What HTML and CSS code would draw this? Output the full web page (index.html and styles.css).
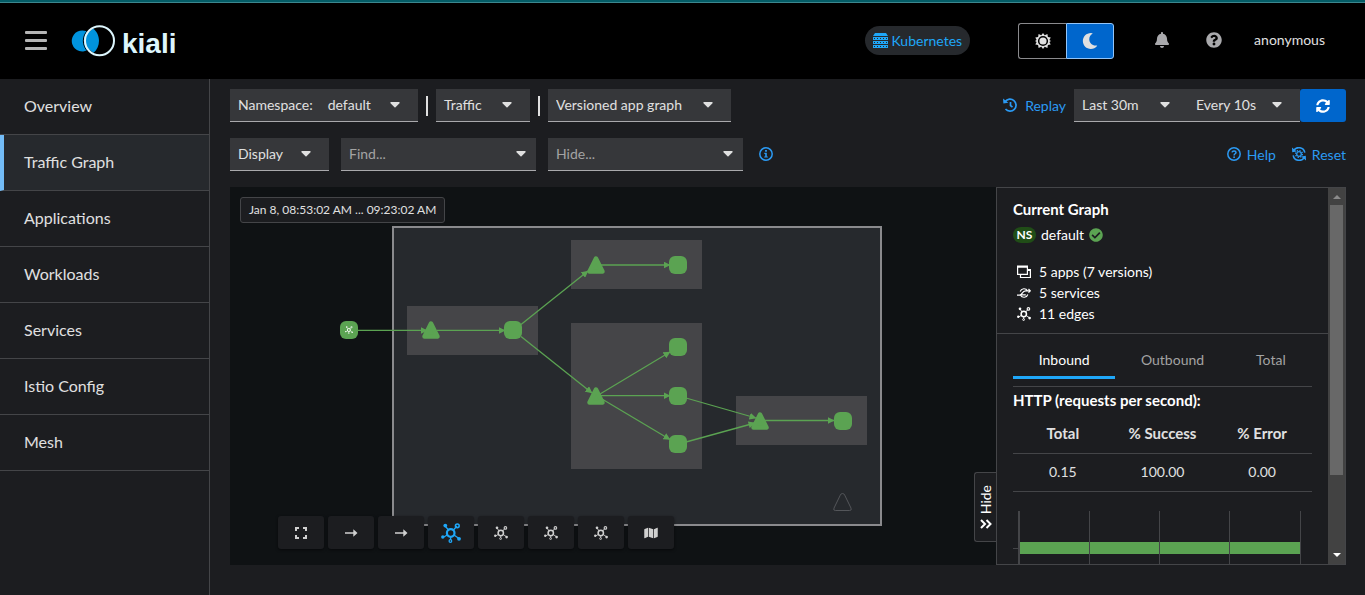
FILE: index.html
```html
<!DOCTYPE html>
<html lang="en">
<head>
<meta charset="utf-8">
<meta name="viewport" content="width=device-width, initial-scale=1">
<title>Kiali</title>
<link rel="stylesheet" href="styles.css">
</head>
<body>
<svg class="defs" aria-hidden="true">
  <symbol id="caret" viewBox="0 0 10 6"><path d="M1 0h8a.7.7 0 0 1 .5 1.200L5.500 5.200a.7.7 0 0 1-1 0L.5 1.200A.7.7 0 0 1 1 0z"/></symbol>
  <symbol id="topology" viewBox="0 0 20 20">
    <g fill="none" stroke="currentColor" stroke-width="1.300"><path d="M4 3l4 4.500M16 3l-4 4.500M2 14.500l5-3M18 15.500l-5-3.500M9.600 13v4"/><circle cx="9.700" cy="10" r="3.800" stroke-width="2.200"/><circle cx="16.300" cy="2.800" r="1.900" stroke-width="1.500"/><circle cx="9.400" cy="18" r="1.300"/></g>
    <circle cx="4.300" cy="2.600" r="1.900"/><circle cx="1.800" cy="14" r="1.700"/><circle cx="18" cy="15.800" r="1.900"/>
  </symbol>
  <symbol id="arrow" viewBox="0 0 14 14"><path d="M1 6.200h8.300V3.300L13.500 7l-4.200 3.700V7.800H1z"/></symbol>
  <symbol id="triangle" viewBox="-10 -10 20 20" overflow="visible"><path d="M0-6.500L6.500 6.500H-6.500z" stroke-width="4.500" stroke-linejoin="round"/></symbol>
</svg>

<header class="masthead">
  <button class="plain menu-button" aria-label="Global navigation"><span></span><span></span><span></span></button>
  <a class="brand" href="#overview" aria-label="Kiali">
    <svg class="brand-mark" width="46" height="32" viewBox="0 0 46 32" aria-hidden="true">
      <path fill="#0093dd" d="M11.500 5.500c2.500 0 4.500.8 6.200 2L22 3.500c3.500 2.500 6 7 6 12.300 0 5-2 9.300-5.500 12l-4.800-3.500a10.500 10.500 0 1 1-6.200-18.800z"/>
      <path d="M17 5a14.800 14.800 0 0 0 0 21.600" fill="none" stroke="#000" stroke-width="1"/>
      <circle cx="28.500" cy="15.800" r="14.500" fill="none" stroke="#ddf6fd" stroke-width="2"/>
    </svg>
    <span class="brand-name">kiali</span>
  </a>
  <div class="masthead-tools">
    <span class="cluster"><svg width="15" height="15" viewBox="0 0 15 15" aria-hidden="true"><path d="M2 0h11l2 3H0z"/><path d="M0 4h15v3H0zM0 8h15v3H0zM0 12h15v3H0z"/><path stroke="#26292d" stroke-dasharray="1 2" d="M1 5.500h13M1 9.500h13M1 13.500h13"/></svg>Kubernetes</span>
    <div class="theme" role="group" aria-label="Theme">
      <button aria-label="Light theme"><svg width="16" height="16" viewBox="0 0 16 16" aria-hidden="true"><path fill-rule="evenodd" d="M8 0l1.700 2.300 2.700-1.200.5 2.800 2.900.6L14.400 7 16 8l-1.600 1.100 1.300 2.500-2.800.5-.5 2.800-2.700-1.200L8 16l-1.700-2.300-2.700 1.200-.5-2.800-2.800-.5 1.300-2.500L0 8l1.600-1L.3 4.500l2.800-.6.5-2.800 2.700 1.200zM8 2.900a5.100 5.100 0 1 0 0 10.200A5.100 5.100 0 0 0 8 2.900zm0 1.500a3.600 3.600 0 1 1 0 7.200 3.600 3.600 0 0 1 0-7.200z"/></svg></button>
      <button class="selected" aria-pressed="true" aria-label="Dark theme"><svg width="16" height="16" viewBox="0 0 512 512" aria-hidden="true"><path d="M283.211 512c78.962 0 151.079-35.925 198.857-94.792 7.068-8.708-.639-21.430-11.562-19.350-124.203 23.654-238.262-71.576-238.262-196.954 0-72.222 38.662-138.635 101.498-174.394 9.686-5.512 7.250-20.197-3.756-22.230A258.156 258.156 0 0 0 283.211 0c-141.309 0-256 114.511-256 256 0 141.309 114.511 256 256 256z"/></svg></button>
    </div>
    <button class="plain bell" aria-label="Notifications"><svg width="14" height="16" viewBox="0 0 448 512" aria-hidden="true"><path d="M224 512c35.320 0 63.970-28.650 63.970-64H160.030c0 35.350 28.650 64 63.970 64zm215.390-149.710c-19.320-20.760-55.470-51.990-55.470-154.290 0-77.700-54.480-139.900-127.940-155.160V32c0-17.670-14.320-32-31.980-32s-31.980 14.330-31.980 32v20.840C118.560 68.100 64.080 130.300 64.080 208c0 102.300-36.150 133.530-55.470 154.290-6 6.450-8.660 14.160-8.610 21.710.11 16.400 12.980 32 32.100 32h383.800c19.120 0 32-15.600 32.100-32 .05-7.550-2.610-15.270-8.610-21.710z"/></svg></button>
    <button class="plain help-menu" aria-label="Help menu"><svg width="16" height="16" viewBox="0 0 512 512" aria-hidden="true"><path d="M504 256c0 136.997-111.043 248-248 248S8 392.997 8 256C8 119.083 119.043 8 256 8s248 111.083 248 248zM262.655 90c-54.497 0-89.255 22.957-116.549 63.758-3.536 5.286-2.353 12.415 2.715 16.258l34.699 26.310c5.205 3.947 12.621 3.008 16.665-2.122 17.864-22.658 30.113-35.797 57.303-35.797 20.429 0 45.698 13.148 45.698 32.958 0 14.976-12.363 22.667-32.534 33.976C247.128 238.528 216 254.941 216 296v4c0 6.627 5.373 12 12 12h56c6.627 0 12-5.373 12-12v-1.333c0-28.462 83.186-29.647 83.186-106.667 0-58.002-60.165-102-116.531-102zM256 338c-25.365 0-46 20.635-46 46 0 25.364 20.635 46 46 46s46-20.636 46-46c0-25.365-20.635-46-46-46z"/></svg></button>
    <button class="plain user">anonymous</button>
  </div>
</header>

<div class="shell">
  <nav class="sidebar" aria-label="Main">
    <a href="#overview">Overview</a>
    <a href="#graph" class="current" aria-current="page">Traffic Graph</a>
    <a href="#applications">Applications</a>
    <a href="#workloads">Workloads</a>
    <a href="#services">Services</a>
    <a href="#istio">Istio Config</a>
    <a href="#mesh">Mesh</a>
  </nav>

  <main class="content">
    <div class="toolbar">
      <button class="toggle namespace"><span>Namespace:</span><span>default</span><svg class="caret" aria-hidden="true"><use href="#caret"/></svg></button>
      <span class="divider"></span>
      <button class="toggle traffic"><span>Traffic</span><svg class="caret" aria-hidden="true"><use href="#caret"/></svg></button>
      <span class="divider"></span>
      <div class="field graph-type"><select aria-label="Graph type"><option>Versioned app graph</option><option>App graph</option></select><svg class="caret" aria-hidden="true"><use href="#caret"/></svg></div>
      <div class="toolbar-end">
        <a class="link replay" href="#replay"><svg width="14" height="14" viewBox="0 0 14 14" aria-hidden="true"><path d="M2.200 3.600A6 6 0 1 1 2.500 11M7.500 4v3.500l2 1.600" fill="none" stroke="currentColor" stroke-width="1.700"/><path d="M0 .6l.4 5 4.900-.8z"/></svg>Replay</a>
        <div class="time-controls">
          <div class="field duration"><select aria-label="Duration"><option>Last 30m</option><option>Last 1h</option></select><svg class="caret" aria-hidden="true"><use href="#caret"/></svg></div>
          <div class="field interval"><select aria-label="Refresh interval"><option>Every 10s</option><option>Every 15s</option></select><svg class="caret" aria-hidden="true"><use href="#caret"/></svg></div>
          <button class="refresh" aria-label="Refresh"><svg width="14" height="14" viewBox="0 0 512 512" aria-hidden="true"><path d="M370.720 133.280C339.458 104.008 298.888 87.962 255.848 88c-77.458.068-144.328 53.178-162.791 126.850-1.344 5.363-6.122 9.150-11.651 9.150H24.103c-7.498 0-13.194-6.807-11.807-14.176C33.933 94.924 134.813 8 256 8c66.448 0 126.791 26.136 171.315 68.685L463.030 40.970C478.149 25.851 504 36.559 504 57.941V192c0 13.255-10.745 24-24 24H345.941c-21.382 0-32.090-25.851-16.971-40.971l41.750-41.749zM32 296h134.059c21.382 0 32.090 25.851 16.971 40.971l-41.750 41.750c31.262 29.273 71.835 45.319 114.876 45.280 77.418-.07 144.315-53.144 162.787-126.849 1.344-5.363 6.122-9.150 11.651-9.150h57.304c7.498 0 13.194 6.807 11.807 14.176C478.067 417.076 377.187 504 256 504c-66.448 0-126.791-26.136-171.315-68.685L48.970 471.030C33.851 486.149 8 475.441 8 454.059V320c0-13.255 10.745-24 24-24z"/></svg></button>
        </div>
      </div>
    </div>

    <div class="toolbar second">
      <button class="toggle display"><span>Display</span><svg class="caret" aria-hidden="true"><use href="#caret"/></svg></button>
      <div class="field search"><input type="text" placeholder="Find..." aria-label="Find"><svg class="caret" aria-hidden="true"><use href="#caret"/></svg></div>
      <div class="field search"><input type="text" placeholder="Hide..." aria-label="Hide"><svg class="caret" aria-hidden="true"><use href="#caret"/></svg></div>
      <button class="plain info" aria-label="Find and hide help"><svg width="14" height="14" viewBox="0 0 14 14" aria-hidden="true"><circle cx="7" cy="7" r="6.200" fill="none" stroke="currentColor" stroke-width="1.500"/><path d="M6.100 3h1.800v1.700H6.100zM5.300 5.800h2.500v3.600h1v1.200H5.200V9.400h1V7h-.9z"/></svg></button>
      <div class="toolbar-end">
        <a class="link" href="#help"><svg width="14" height="14" viewBox="0 0 14 14" aria-hidden="true"><circle cx="7" cy="7" r="6.200" fill="none" stroke="currentColor" stroke-width="1.500"/><path d="M5 5.300C5.400 3.300 9 3.500 9 5.400 9 6.800 7.100 6.700 7.100 8.400" fill="none" stroke="currentColor" stroke-width="1.500"/><circle cx="7.100" cy="10.200" r=".9"/></svg>Help</a>
        <a class="link" href="#reset"><svg width="14" height="14" viewBox="0 0 14 14" aria-hidden="true"><path d="M1.500 4a6 6 0 0 1 11.300 1.700M12.500 10A6 6 0 0 1 1.200 8.300" fill="none" stroke="currentColor" stroke-width="1.600"/><path d="M0 .5l.2 4.700 4.600-.6zM14 13.500l-.2-4.700-4.600.6z"/><circle cx="7" cy="7" r="2.300" fill="none" stroke="currentColor" stroke-width="1.300"/><circle cx="7" cy="7" r="3.400" fill="none" stroke="currentColor" stroke-width="1.300" stroke-dasharray="1.300 1.370"/></svg>Reset</a>
      </div>
    </div>

    <section class="workspace">
      <div class="graph">
        <svg class="canvas" role="img" aria-label="Traffic graph of the default namespace">
          <defs><marker id="head" viewBox="0 0 7 7" refX="6.500" refY="3.500" markerWidth="7" markerHeight="7" markerUnits="userSpaceOnUse" orient="auto"><path d="M0 0l7 3.500L0 7z" fill="#5ba352"/></marker></defs>
          <rect x="163" y="40" width="488" height="298" fill="#26292d" stroke="#8a8a8d" stroke-width="2"/>
          <g fill="#454548">
            <rect x="177" y="119" width="131" height="49"/>
            <rect x="341" y="53" width="131" height="49"/>
            <rect x="341" y="136" width="131" height="146"/>
            <rect x="506" y="209" width="131" height="49"/>
          </g>
          <g stroke="#5ba352" stroke-width="1.300">
            <path marker-end="url(#head)" d="M127 143.400H197"/><path marker-end="url(#head)" d="M207 143.400H275"/>
            <path marker-end="url(#head)" d="M291 137.500L358 84"/><path marker-end="url(#head)" d="M291 149.500L362 206"/>
            <path marker-end="url(#head)" d="M371 78H440"/><path marker-end="url(#head)" d="M370 207L440 165"/>
            <path marker-end="url(#head)" d="M371 208.700H440"/><path marker-end="url(#head)" d="M372 212L440 252.500"/>
            <path marker-end="url(#head)" d="M456 211L526 231"/><path marker-end="url(#head)" d="M456 255L525 236"/>
            <path marker-end="url(#head)" d="M535 233.500H604"/>
          </g>
          <g fill="#5ba352">
            <rect x="110" y="134" width="18" height="18" rx="6"/>
            <rect x="274" y="134" width="18" height="18" rx="6"/>
            <rect x="439" y="69" width="18" height="18" rx="6"/>
            <rect x="439" y="151" width="18" height="18" rx="6"/>
            <rect x="439" y="200" width="18" height="18" rx="6"/>
            <rect x="439" y="248" width="18" height="18" rx="6"/>
            <rect x="604" y="225" width="18" height="18" rx="6"/>
          </g>
          <g fill="#5ba352" stroke="#5ba352">
            <use href="#triangle" x="191" y="133" width="20" height="20"/>
            <use href="#triangle" x="356" y="68" width="20" height="20"/>
            <use href="#triangle" x="356" y="199" width="20" height="20"/>
            <use href="#triangle" x="520" y="224" width="20" height="20"/>
          </g>
          <path d="M612.500 306.500q1.500 0 2.200 1.600l6.300 13q1 2.400-1.300 2.400h-14.400q-2.300 0-1.300-2.400l6.300-13q.7-1.600 2.200-1.600z" fill="none" stroke="#54565a"/>
          <use href="#topology" x="115" y="139" width="8" height="8" fill="#fff" color="#fff"/>
        </svg>
        <span class="time-range">Jan 8, 08:53:02 AM ... 09:23:02 AM</span>
        <div class="graph-tools" role="toolbar" aria-label="Graph layout">
          <button aria-label="Fit to screen"><svg class="outline" width="14" height="14" viewBox="0 0 14 14" stroke-width="2" aria-hidden="true"><path d="M2 5V2h3M9 2h3v3M12 9v3H9M5 12H2V9"/></svg></button>
          <button aria-label="Hide healthy edges"><svg width="14" height="14" aria-hidden="true"><use href="#arrow"/></svg></button>
          <button aria-label="Hide idle edges"><svg width="14" height="14" aria-hidden="true"><use href="#arrow"/></svg></button>
          <button class="active" aria-label="Layout default"><svg width="20" height="20" aria-hidden="true"><use href="#topology"/></svg></button>
          <button aria-label="Layout 1"><svg width="14" height="14" aria-hidden="true"><use href="#topology"/></svg></button>
          <button aria-label="Layout 2"><svg width="14" height="14" aria-hidden="true"><use href="#topology"/></svg></button>
          <button aria-label="Layout 3"><svg width="14" height="14" aria-hidden="true"><use href="#topology"/></svg></button>
          <button aria-label="Legend"><svg width="14" height="12" viewBox="0 0 576 512" aria-hidden="true"><path d="M0 117.660v346.320c0 11.320 11.430 19.060 21.940 14.860L160 416V32L20.120 87.950A32.006 32.006 0 0 0 0 117.660zM192 416l192 64V96L192 32v384zM554.060 33.160L416 96v384l139.880-55.950A31.996 31.996 0 0 0 576 394.340V48.020c0-11.320-11.430-19.060-21.940-14.860z"/></svg></button>
        </div>
        <button class="hide-panel"><span>Hide</span><svg class="outline" width="12" height="10" viewBox="0 0 12 10" stroke-width="2" aria-hidden="true"><path d="M1 1l4 4-4 4M6.500 1l4 4-4 4"/></svg></button>
      </div>

      <aside class="summary">
        <div class="summary-body">
          <div class="summary-head">
            <h2>Current Graph</h2>
            <p class="ns"><span class="badge">NS</span>default<svg width="14" height="14" viewBox="0 0 512 512" aria-hidden="true"><path d="M504 256c0 136.967-111.033 248-248 248S8 392.967 8 256 119.033 8 256 8s248 111.033 248 248zM227.314 387.314l184-184c6.248-6.248 6.248-16.379 0-22.627l-22.627-22.627c-6.248-6.248-16.379-6.249-22.628 0L216 308.118l-70.059-70.059c-6.248-6.248-16.379-6.248-22.628 0l-22.627 22.627c-6.248 6.248-6.248 16.379 0 22.627l104 104c6.249 6.249 16.379 6.249 22.628.001z"/></svg></p>
            <ul>
              <li><svg width="14" height="14" viewBox="0 0 14 14" aria-hidden="true"><path fill="none" stroke="currentColor" stroke-width="1.200" d="M.6 1v8.400h9.800V1M3.500 9.500v3h9.900V4.500h-3"/><path d="M0 .5h11v2.300H0zM10.500 4h3.500v2h-3.500z"/></svg>5 apps (7 versions)</li>
              <li><svg class="outline" width="14" height="14" viewBox="0 0 14 14" stroke-width="1.200" aria-hidden="true"><path d="M3.200 5.500a4 4 0 0 1 7.300-.7M10.800 8.500a4 4 0 0 1-7.300.7M0 9.200h2.500c3 0 2.500-4.400 6-4.400H13M8.800 8.800H4.500M11.500 3l1.800 1.800-1.800 1.800"/></svg>5 services</li>
              <li><svg width="14" height="14" aria-hidden="true"><use href="#topology"/></svg>11 edges</li>
            </ul>
          </div>
          <div class="metrics">
            <div class="tabs" role="tablist">
              <button role="tab" aria-selected="true">Inbound</button>
              <button role="tab">Outbound</button>
              <button role="tab">Total</button>
            </div>
            <h3>HTTP (requests per second):</h3>
            <table>
              <thead><tr><th>Total</th><th>% Success</th><th>% Error</th></tr></thead>
              <tbody><tr><td>0.15</td><td>100.00</td><td>0.00</td></tr></tbody>
            </table>
            <svg class="chart" role="img" aria-label="Responses: 100% OK">
              <rect x="6" y="31" width="281" height="12" fill="#5ba352"/>
              <g fill="#444548"><rect x="0" y="37" width="6" height="1"/><rect x="5" width="2" height="100%"/><rect x="76" width="1" height="100%"/><rect x="146" width="1" height="100%"/><rect x="216" width="1" height="100%"/><rect x="287" width="1" height="100%"/></g>
            </svg>
          </div>
        </div>
        <div class="scrollbar" aria-hidden="true">
          <svg width="8" height="4" viewBox="0 0 8 4"><path d="M4 0l4 4H0z" fill="#8b8b8b"/></svg>
          <span class="track"><span class="thumb"></span></span>
          <svg width="8" height="4" viewBox="0 0 8 4"><path d="M0 0h8L4 4z" fill="#fff"/></svg>
        </div>
      </aside>
    </section>
  </main>
</div>
</body>
</html>
```

FILE: styles.css
```css
* { box-sizing: border-box; }

body {
  margin: 0;
  min-height: 100vh;
  display: flex;
  flex-direction: column;
  background: #1c1d20;
  color: #e0e0e0;
  font: 14px/21px Lato, "Open Sans", sans-serif;
}

button, select, input {
  font: inherit;
  color: inherit;
  border: 0;
  border-radius: 0;
  padding: 0;
  margin: 0;
  background: none;
}

svg { fill: currentColor; flex: none; }
.outline { fill: none; stroke: currentColor; }
h2, h3, p, ul { margin: 0; padding: 0; font-size: 14px; }
h2, h3, th { font-size: 15px; }
ul { list-style: none; }
a { color: inherit; text-decoration: none; }
.defs { position: absolute; width: 0; height: 0; }

.masthead {
  display: flex;
  align-items: center;
  height: 79px;
  padding: 0 40px 0 25px;
  background: #000;
  border-top: 2px solid #045c66;
  box-shadow: inset 0 1px #3c878e;
}

.menu-button { display: grid; gap: 5px; width: 22px; }
.menu-button span { height: 3px; border-radius: 1px; background: #b5b5b5; }
.brand { display: flex; align-items: center; gap: 5px; margin-left: 24px; }
.brand-name {
  font: bold 28px/32px "Liberation Sans", sans-serif;
  color: #ddf6fd;
  padding-top: 6px;
}
.masthead-tools { display: flex; align-items: center; margin-left: auto; }
.cluster {
  display: flex;
  align-items: center;
  gap: 3px;
  height: 29px;
  padding: 0 8px;
  border-radius: 15px;
  background: #26292d;
  color: #1fa7f8;
}
.theme { display: flex; margin-left: 48px; }
.theme button {
  display: grid;
  place-items: center;
  width: 48px;
  height: 36px;
  border: 1px solid #8a8a8d;
  border-right: 0;
  border-radius: 3px 0 0 3px;
}
.theme .selected { background: #0066cc; border: 1px solid #92c5f9; border-radius: 0 3px 3px 0; }
.bell { margin-left: 41px; }
.help-menu { margin-left: 37px; }
.bell, .help-menu { display: grid; padding-bottom: 2px; color: #a9a9ac; }
.user { margin-left: 32px; padding-bottom: 3px; }

.shell { display: flex; flex: 1; }
.sidebar { width: 210px; flex: none; border-right: 1px solid #444548; }
.sidebar a {
  display: flex;
  align-items: center;
  height: 56px;
  padding: 0 0 2px 24px;
  border-bottom: 1px solid #444548;
  font-size: 16px;
}
.sidebar .current { background: #26292d; border-left: 4px solid #73bcf7; padding-left: 20px; }

.content {
  flex: 1;
  min-width: 0;
  display: flex;
  flex-direction: column;
  gap: 16px;
  padding: 10px 19px 30px 20px;
}

.toolbar { display: flex; align-items: center; gap: 8px; height: 33px; }
.second { gap: 12px; }
.toolbar-end { display: flex; align-items: center; gap: 16px; margin-left: auto; }
.toolbar:not(.second) .toolbar-end { gap: 8px; }
.divider { width: 2px; height: 20px; background: #e0e0e0; }

.toggle, .field {
  display: flex;
  align-items: center;
  height: 33px;
  background: #36373a;
  border-bottom: 1px solid #a9a9ac;
}
.toggle { padding: 0 18px 0 8px; gap: 12px; }
.toggle span { padding-bottom: 2px; }
.caret { width: 10px; height: 6px; margin-left: auto; }
.namespace { width: 188px; gap: 15px; }
.traffic { width: 94px; }
.graph-type { width: 183px; }
.display { width: 99px; }
.search { width: 195px; }
.duration { width: 114px; }
.interval { width: 112px; }
.field { position: relative; }
.field select, .field input { appearance: none; width: 100%; height: 32px; padding: 0 26px 2px 8px; outline: 0; }
.field .caret { position: absolute; right: 18px; pointer-events: none; }
.search .caret { right: 10px; }
.field input::placeholder { color: #a3a3a3; opacity: 1; }

.link { display: flex; align-items: center; gap: 6px; padding-bottom: 1px; color: #2b9af3; }
.replay { gap: 8px; }
.time-controls { display: flex; }
.refresh {
  display: grid;
  place-items: center;
  width: 46px;
  height: 33px;
  border-radius: 3px;
  background: #0066cc;
  color: #fff;
}
.info { display: grid; margin-left: 4px; padding-bottom: 1px; color: #2b9af3; }

.workspace { flex: 1; display: flex; min-height: 378px; }
.graph { position: relative; flex: 1; min-width: 0; background: #0f1214; overflow: hidden; }
.canvas { position: absolute; width: 100%; height: 100%; }
.time-range {
  position: absolute;
  left: 10px;
  top: 10px;
  padding: 1px 8px 2px;
  border: 1px solid #444548;
  border-radius: 3px;
  background: #1c1d20;
  font-size: 12px;
}
.graph-tools { position: absolute; left: 48px; bottom: 16px; display: flex; gap: 4px; }
.graph-tools button {
  display: grid;
  place-items: center;
  width: 46px;
  height: 33px;
  border-radius: 3px;
  background: #1c1d20;
  color: #d0d0d0;
  box-shadow: 0 1px 3px #0008;
}
.graph-tools .active { color: #1fa7f8; }
.hide-panel {
  position: absolute;
  right: 0;
  bottom: 23px;
  display: flex;
  flex-direction: column;
  align-items: center;
  justify-content: center;
  width: 22px;
  height: 70px;
  gap: 5px;
  border: 1px solid #444548;
  border-right: 0;
  border-radius: 3px 0 0 3px;
  background: #1c1d20;
  color: #fff;
}
.hide-panel span { writing-mode: vertical-rl; rotate: 180deg; }

.summary { display: flex; width: 350px; flex: none; border: 1px solid #444548; color: #fff; }
.summary-body { flex: 1; display: flex; flex-direction: column; }
.summary-head { padding: 11px 16px 9px; border-bottom: 1px solid #444548; }
.ns { display: flex; align-items: center; gap: 5px; padding: 4px 0 16px; }
.badge {
  width: 23px;
  border-radius: 8px;
  background: #204d17;
  font-size: 12px;
  line-height: 16px;
  font-weight: 700;
  text-align: center;
}
.ns svg { color: #5ba352; }
.summary li { display: flex; align-items: center; gap: 8px; padding-left: 4px; }
.metrics { flex: 1; display: flex; flex-direction: column; padding: 0 16px; }
.tabs {
  display: flex;
  height: 53px;
  padding-bottom: 7px;
  border-bottom: 1px solid #444548;
  color: #a3a3a3;
}
.tabs button { flex: 114 0 0; padding-top: 6px; }
.tabs button:first-child { flex-grow: 102; padding-top: 9px; }
.tabs button:last-child { flex-grow: 82; }
.tabs [aria-selected] { border-bottom: 3px solid #1fa7f8; color: #fff; }
.metrics h3 { padding: 3px 0 4px; }
table { border-collapse: collapse; width: 100%; table-layout: fixed; color: #e0e0e0; }
th, td { height: 38px; padding: 0 0 1px; text-align: center; border-bottom: 1px solid #444548; }
.chart { width: 100%; height: 53px; flex: 1 0 auto; margin-top: 19px; }

.scrollbar {
  display: flex;
  flex-direction: column;
  align-items: center;
  width: 17px;
  padding: 7px 0 7px;
  background: #424242;
}
.track { flex: 1; width: 13px; margin: 6px 0; }
.thumb { display: block; height: 79%; background: #686868; }
```
